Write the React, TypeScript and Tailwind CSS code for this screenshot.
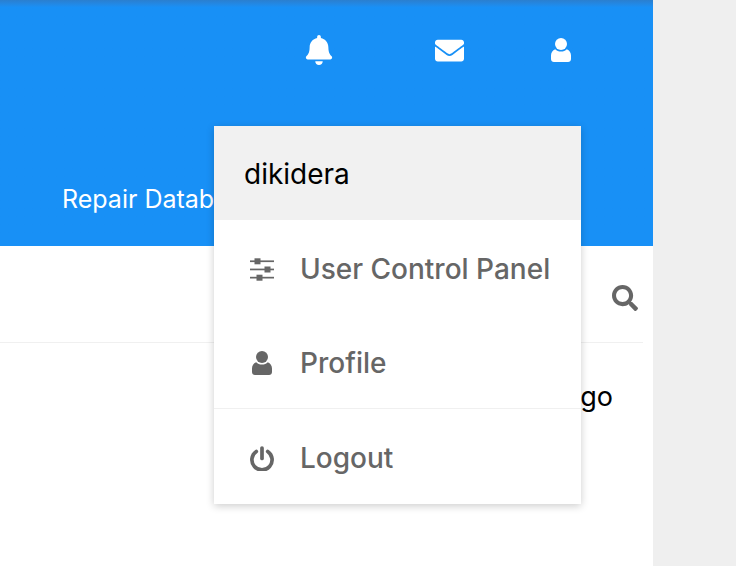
import { FaBell, FaEnvelope, FaSearch } from "react-icons/fa";

function User({ className }: { className?: string }) {
  return (
    <svg width="20" height="24" viewBox="0 0 20 24" fill="currentColor" className={className}>
      <circle cx="10" cy="6" r="6" />
      <path d="M4.2 11.2C5.6 12.7 7.7 13.5 10 13.5s4.4-.8 5.8-2.3C18.4 12.2 20 14.6 20 17.6v3.4c0 1.7-1.3 3-3 3H3c-1.7 0-3-1.3-3-3v-3.4c0-3 1.6-5.4 4.2-6.4Z" />
    </svg>
  );
}

function Sliders() {
  return (
    <svg width="24" height="23" viewBox="0 0 24 23" fill="#666" className="block">
      <rect x="0" y="2.4" width="24" height="1.7" />
      <rect x="4.5" y="0.3" width="6" height="6" />
      <rect x="0" y="10.6" width="24" height="1.7" />
      <rect x="14.5" y="8.5" width="6" height="6" />
      <rect x="0" y="18.8" width="24" height="1.7" />
      <rect x="6.5" y="16.7" width="6" height="6" />
    </svg>
  );
}

function Power() {
  return (
    <svg width="24" height="25" viewBox="0 0 24 25" fill="none" stroke="#666" strokeWidth="3.7" strokeLinecap="round" className="block">
      <path d="M6.3 5.5a10.1 10.1 0 1 0 11.4 0" />
      <path d="M12 2v10.5" />
    </svg>
  );
}

export default function App() {
  return (
    <div className="relative flex h-[566px] w-[736px] overflow-hidden bg-[#efefef] font-['Inter',sans-serif]">
      <div className="flex w-[653px] flex-col bg-white">
        <header className="flex h-[246px] flex-col justify-between bg-[#1890f6] bg-gradient-to-b from-[#2a7fcf] to-[#1890f6] to-[3%] pl-[62px]">
          <div className="flex items-center justify-end pt-[35px] pr-[82px] text-white">
            <FaBell className="h-[30px] w-[28px]" />
            <FaEnvelope className="ml-[102px] h-[29px] w-[29px]" />
            <User className="ml-[87px] block" />
          </div>
          <div className="pb-[31px] text-[25px] leading-[32px] text-white">Repair Database</div>
        </header>
        <div className="mr-[10px] flex h-[97px] items-center justify-end border-b border-[#f0f0f0] pr-[5px]">
          <FaSearch className="mt-[8px] h-[26px] w-[26px] text-[#666]" />
        </div>
        <div className="pt-[37px] pr-[40px] text-right text-[27px] leading-[34px] text-black">3 days ago</div>
      </div>

      <div className="absolute top-[126px] left-[214px] w-[367px] bg-white shadow-[0_2px_8px_rgba(0,0,0,0.2)]">
        <div className="flex h-[94px] items-center bg-[#f1f1f1] pt-[1px] pl-[30px] text-[28px] text-black">dikidera</div>
        <div className="border-b border-[#f0f0f0]">
          <div className="flex h-[95px] items-center pt-[3px] text-[28px] font-medium text-[#666]">
            <div className="flex w-[86px] justify-center pl-[10px]"><Sliders /></div>
            User Control Panel
          </div>
          <div className="flex h-[93px] items-center pt-[3px] text-[28px] font-medium text-[#666]">
            <div className="flex w-[86px] justify-center pl-[10px]"><User className="block" /></div>
            Profile
          </div>
        </div>
        <div className="flex h-[95px] items-center pt-[3px] text-[28px] font-medium text-[#666]">
          <div className="flex w-[86px] justify-center pl-[10px]"><Power /></div>
          Logout
        </div>
      </div>
    </div>
  );
}
